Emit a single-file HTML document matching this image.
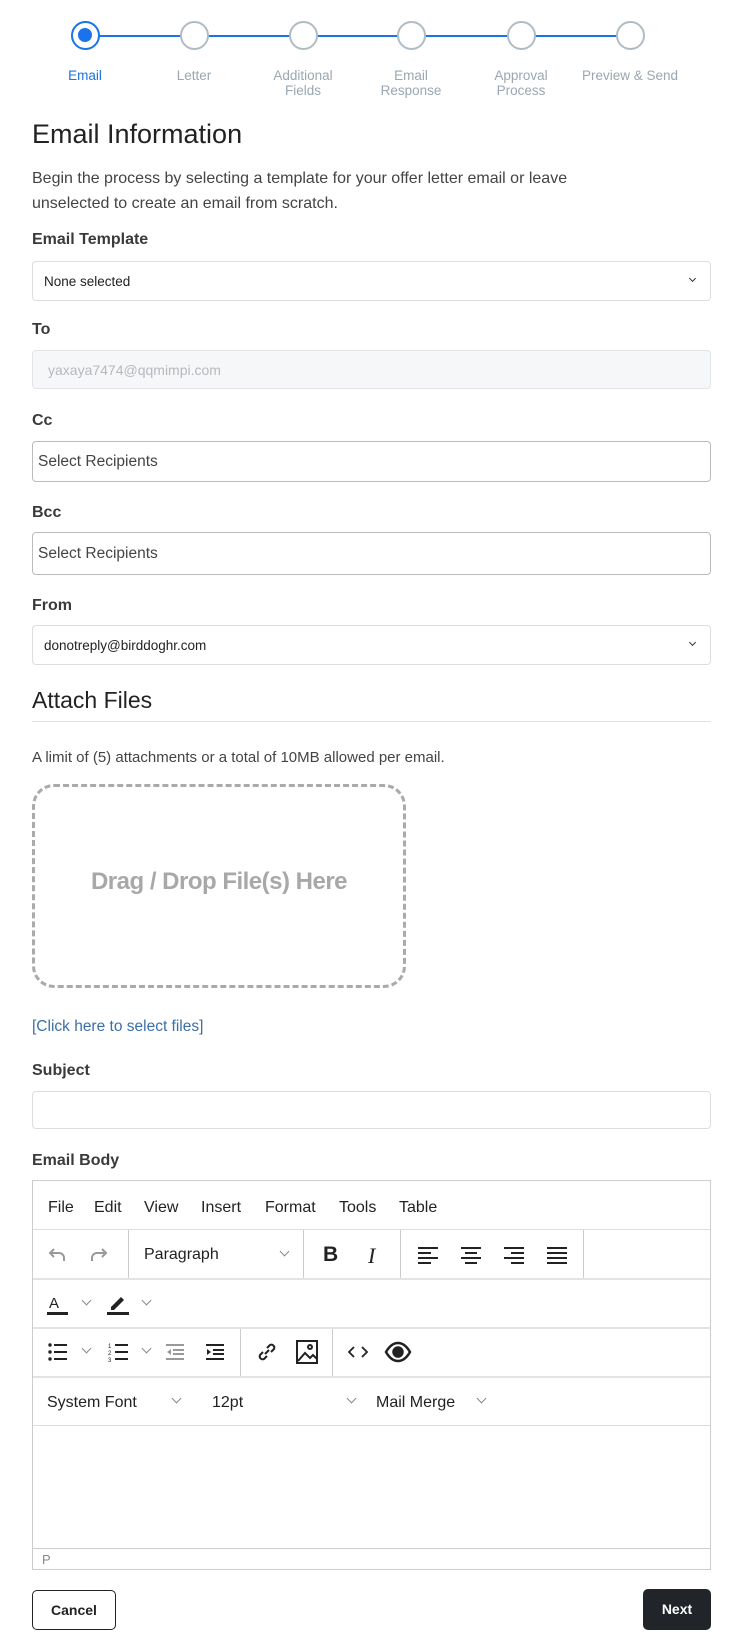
<!DOCTYPE html>
<html><head><meta charset="utf-8"><style>
*{box-sizing:border-box;margin:0;padding:0}
body{width:742px;height:1649px;background:#fff;font-family:"Liberation Sans",sans-serif;color:#333;position:relative;overflow:hidden}
.a{position:absolute}
.lbl{position:absolute;left:32px;font-size:16px;font-weight:bold;color:#3a3a3a}
.box{position:absolute;left:32px;width:679px;border:1px solid #ccc;border-radius:4px;background:#fff}
.st{position:absolute;font-size:13.5px;color:#9aa7b2;text-align:center;width:120px;line-height:15px}
.circ{position:absolute;top:21px;width:29px;height:29px;border-radius:50%;border:2px solid #b0bcc4;background:#fff}
.sep{position:absolute;width:1px;background:#ccc}
.hl{position:absolute;left:0;width:677px;height:1px;background:#ddd}
.tb{position:absolute;font-size:16px;color:#222}
.chev{position:absolute;width:7px;height:7px;border-right:1.5px solid #888;border-bottom:1.5px solid #888;transform:rotate(45deg)}
</style></head><body>
<div class="a" style="left:86px;top:35px;width:545px;height:2px;background:#1a73e8"></div>
<div class="circ" style="left:71px;border-color:#1a73e8;border-width:2.5px"><div style="position:absolute;left:5px;top:5px;width:14px;height:14px;border-radius:50%;background:#1a73e8"></div></div>
<div class="circ" style="left:180px"></div>
<div class="circ" style="left:289px"></div>
<div class="circ" style="left:397px"></div>
<div class="circ" style="left:507px"></div>
<div class="circ" style="left:616px"></div>
<div class="st" style="left:25px;top:68px;color:#1a73e8">Email</div>
<div class="st" style="left:134px;top:68px">Letter</div>
<div class="st" style="left:243px;top:68px">Additional<br>Fields</div>
<div class="st" style="left:351px;top:68px">Email<br>Response</div>
<div class="st" style="left:461px;top:68px">Approval<br>Process</div>
<div class="st" style="left:570px;top:68px">Preview &amp; Send</div>

<div class="a" style="left:32px;top:119px;font-size:27px;color:#222">Email Information</div>
<div class="a" style="left:32px;top:166px;font-size:16px;line-height:25px;color:#444;width:590px">Begin the process by selecting a template for your offer letter email or leave unselected to create an email from scratch.</div>

<div class="lbl" style="top:231px">Email Template</div>
<div class="box" style="top:261px;height:40px;border-color:#ddd"><span class="a" style="left:11px;top:12px;font-size:13.5px;color:#222">None selected</span><div class="chev" style="right:15px;top:14px;width:5px;height:5px;border-color:#333;border-width:1.2px"></div></div>

<div class="lbl" style="top:321px">To</div>
<div class="box" style="top:350px;height:39px;background:#f6f7f9;border-color:#e2e4e7"><span class="a" style="left:15px;top:11px;font-size:14px;color:#b5b9bd">yaxaya7474@qqmimpi.com</span></div>

<div class="lbl" style="top:412px">Cc</div>
<div class="box" style="top:441px;height:41px;border-color:#bbb"><span class="a" style="left:5px;top:11px;font-size:15.5px;color:#444">Select Recipients</span></div>

<div class="lbl" style="top:504px">Bcc</div>
<div class="box" style="top:532px;height:43px;border-color:#bbb"><span class="a" style="left:5px;top:12px;font-size:15.5px;color:#444">Select Recipients</span></div>

<div class="lbl" style="top:597px">From</div>
<div class="box" style="top:625px;height:40px;border-color:#ddd"><span class="a" style="left:11px;top:12px;font-size:13.5px;color:#222">donotreply@birddoghr.com</span><div class="chev" style="right:15px;top:14px;width:5px;height:5px;border-color:#333;border-width:1.2px"></div></div>

<div class="a" style="left:32px;top:687px;font-size:23px;color:#222">Attach Files</div>
<div class="a" style="left:32px;top:721px;width:679px;height:1px;background:#e2e2e2"></div>
<div class="a" style="left:32px;top:749px;font-size:15px;color:#444">A limit of (5) attachments or a total of 10MB allowed per email.</div>
<div class="a" style="left:32px;top:784px;width:374px;height:204px;border:3px dashed #aaa;border-radius:22px"></div>
<div class="a" style="left:32px;top:868px;width:374px;text-align:center;font-size:24px;font-weight:bold;color:#a8a8a8;letter-spacing:-0.5px">Drag / Drop File(s) Here</div>
<div class="a" style="left:32px;top:1018px;font-size:15.5px;color:#3a6fa8">[Click here to select files]</div>

<div class="lbl" style="top:1062px">Subject</div>
<div class="box" style="top:1091px;height:38px;border-color:#ddd"></div>

<div class="lbl" style="top:1152px">Email Body</div>
<div class="a" style="left:32px;top:1180px;width:679px;height:390px;border:1px solid #ccc">
 <div class="tb" style="left:15px;top:18px">File</div>
 <div class="tb" style="left:61px;top:18px">Edit</div>
 <div class="tb" style="left:111px;top:18px">View</div>
 <div class="tb" style="left:168px;top:18px">Insert</div>
 <div class="tb" style="left:232px;top:18px">Format</div>
 <div class="tb" style="left:306px;top:18px">Tools</div>
 <div class="tb" style="left:366px;top:18px">Table</div>
 <div class="hl" style="top:48px"></div>
 <svg class="a" style="left:12px;top:62px" width="24" height="24" viewBox="0 0 24 24" fill="none" stroke="#999" stroke-width="2"><path d="M9 6 5 10l4 4M5 10h9a5 5 0 0 1 5 5v3"/></svg>
 <svg class="a" style="left:54px;top:62px" width="24" height="24" viewBox="0 0 24 24" fill="none" stroke="#999" stroke-width="2"><path d="M15 6l4 4-4 4M19 10h-9a5 5 0 0 0-5 5v3"/></svg>
 <div class="sep" style="left:95px;top:49px;height:48px"></div>
 <div class="tb" style="left:111px;top:65px">Paragraph</div>
 <div class="chev" style="left:248px;top:67px"></div>
 <div class="sep" style="left:270px;top:49px;height:48px"></div>
 <div class="tb" style="left:290px;top:62px;font-size:21px;font-weight:bold">B</div>
 <div class="tb" style="left:335px;top:62px;font-size:22px;font-style:italic;font-family:'Liberation Serif',serif">I</div>
 <div class="sep" style="left:367px;top:49px;height:48px"></div>
 <svg class="a" style="left:384px;top:64px" width="22" height="20" fill="#222"><rect x="1" y="2" width="20" height="2"/><rect x="1" y="7" width="13" height="2"/><rect x="1" y="12" width="20" height="2"/><rect x="1" y="17" width="13" height="2"/></svg>
 <svg class="a" style="left:427px;top:64px" width="22" height="20" fill="#222"><rect x="1" y="2" width="20" height="2"/><rect x="5" y="7" width="12" height="2"/><rect x="1" y="12" width="20" height="2"/><rect x="5" y="17" width="12" height="2"/></svg>
 <svg class="a" style="left:470px;top:64px" width="22" height="20" fill="#222"><rect x="1" y="2" width="20" height="2"/><rect x="8" y="7" width="13" height="2"/><rect x="1" y="12" width="20" height="2"/><rect x="8" y="17" width="13" height="2"/></svg>
 <svg class="a" style="left:513px;top:64px" width="22" height="20" fill="#222"><rect x="1" y="2" width="20" height="2"/><rect x="1" y="7" width="20" height="2"/><rect x="1" y="12" width="20" height="2"/><rect x="1" y="17" width="20" height="2"/></svg>
 <div class="sep" style="left:550px;top:49px;height:48px"></div>
 <div class="a" style="left:0;top:97px;width:677px;height:2px;background:#e3e3e3"></div>
 <svg class="a" style="left:12px;top:110px" width="26" height="26"><text x="4" y="17" font-family="Liberation Sans" font-size="15" fill="#222">A</text><rect x="2" y="21" width="21" height="3" fill="#222"/></svg>
 <div class="chev" style="left:50px;top:116px"></div>
 <svg class="a" style="left:72px;top:110px" width="26" height="26"><path d="M6 16l10-10 3 3-10 10H6z" fill="#222"/><rect x="2" y="21" width="22" height="3" fill="#222"/></svg>
 <div class="chev" style="left:110px;top:116px"></div>
 <div class="hl" style="top:146px;height:2px;background:#e3e3e3"></div>
 <svg class="a" style="left:14px;top:160px" width="22" height="22" fill="#222"><circle cx="3" cy="4" r="1.7"/><circle cx="3" cy="11" r="1.7"/><circle cx="3" cy="18" r="1.7"/><rect x="7" y="3" width="13" height="2"/><rect x="7" y="10" width="13" height="2"/><rect x="7" y="17" width="13" height="2"/></svg>
 <div class="chev" style="left:50px;top:164px"></div>
 <svg class="a" style="left:75px;top:160px" width="22" height="22" fill="#222"><text x="0" y="7" font-size="6" font-family="Liberation Sans">1</text><text x="0" y="14" font-size="6" font-family="Liberation Sans">2</text><text x="0" y="21" font-size="6" font-family="Liberation Sans">3</text><rect x="7" y="3" width="13" height="2"/><rect x="7" y="10" width="13" height="2"/><rect x="7" y="17" width="13" height="2"/></svg>
 <div class="chev" style="left:110px;top:164px"></div>
 <svg class="a" style="left:131px;top:160px" width="22" height="22" fill="#999"><rect x="2" y="3" width="18" height="2"/><rect x="9" y="8" width="11" height="2"/><rect x="9" y="12" width="11" height="2"/><rect x="2" y="17" width="18" height="2"/><path d="M7 8 3 11l4 3z"/></svg>
 <svg class="a" style="left:171px;top:160px" width="22" height="22" fill="#222"><rect x="2" y="3" width="18" height="2"/><rect x="9" y="8" width="11" height="2"/><rect x="9" y="12" width="11" height="2"/><rect x="2" y="17" width="18" height="2"/><path d="M3 8l4 3-4 3z"/></svg>
 <div class="sep" style="left:207px;top:148px;height:48px"></div>
 <svg class="a" style="left:222px;top:159px" width="24" height="24" fill="none" stroke="#222" stroke-width="2"><path d="M10 14l4-4M8 12l-3 3a3 3 0 0 0 4 4l3-3M16 12l3-3a3 3 0 0 0-4-4l-3 3"/></svg>
 <svg class="a" style="left:262px;top:158px" width="24" height="26" fill="none" stroke="#222" stroke-width="2"><rect x="2" y="2" width="20" height="22"/><circle cx="15" cy="8" r="2"/><path d="M3 22l7-8 5 5 3-3 4 4"/></svg>
 <div class="sep" style="left:299px;top:148px;height:48px"></div>
 <svg class="a" style="left:314px;top:162px" width="22" height="18" fill="none" stroke="#222" stroke-width="1.8"><path d="M7 4 2 9l5 5M15 4l5 5-5 5"/></svg>
 <svg class="a" style="left:351px;top:158px" width="28" height="26" fill="none" stroke="#222" stroke-width="2.5"><path d="M2 13C6 6 10 4 14 4s8 2 12 9c-4 7-8 9-12 9S6 20 2 13z"/><circle cx="14" cy="13" r="4.5" fill="#222"/></svg>
 <div class="a" style="left:0;top:195px;width:677px;height:2px;background:#e3e3e3"></div>
 <div class="tb" style="left:14px;top:213px">System Font</div>
 <div class="chev" style="left:140px;top:214px"></div>
 <div class="tb" style="left:179px;top:213px">12pt</div>
 <div class="chev" style="left:315px;top:214px"></div>
 <div class="tb" style="left:343px;top:213px">Mail Merge</div>
 <div class="chev" style="left:445px;top:214px"></div>
 <div class="hl" style="top:244px"></div>
 <div class="hl" style="top:367px;background:#ccc"></div>
 <div class="a" style="left:9px;top:371px;font-size:13px;color:#888">P</div>
</div>

<div class="a" style="left:32px;top:1590px;width:84px;height:40px;border:1px solid #222;border-radius:5px;text-align:center;line-height:38px;font-size:14px;font-weight:bold;color:#222">Cancel</div>
<div class="a" style="left:643px;top:1589px;width:68px;height:41px;background:#212529;border-radius:5px;text-align:center;line-height:40px;font-size:14px;font-weight:bold;color:#fff">Next</div>
</body></html>
